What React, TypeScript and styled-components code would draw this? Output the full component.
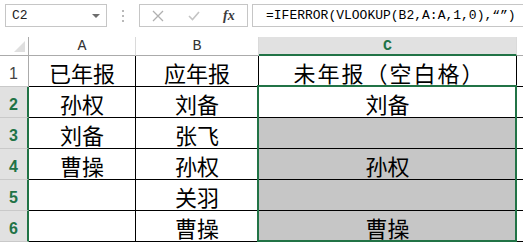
import React from "react";
import styled, { createGlobalStyle } from "styled-components";

const GREEN = "#217346";

const Global = createGlobalStyle`
    html, body {
        margin: 0;
        padding: 0;
        background: #ffffff;
        overflow: hidden;
    }
`;

type RowData = { cells: string[]; selected: boolean };

const rows: RowData[] = [
    { cells: ["已年报", "应年报", "未年报（空白格）"], selected: false },
    { cells: ["孙权", "刘备", "刘备"], selected: true },
    { cells: ["刘备", "张飞", ""], selected: true },
    { cells: ["曹操", "孙权", "孙权"], selected: true },
    { cells: ["", "关羽", ""], selected: true },
    { cells: ["", "曹操", "曹操"], selected: true },
];

const App = () => {
    return (
        <Page>
            <Global />
            <FormulaBar>
                <NameBox>
                    <NameText>C2</NameText>
                    <Caret width="8" height="4" viewBox="0 0 8 4">
                        <path d="M0 0 L8 0 L4 4 Z" fill="#6d6d6d" />
                    </Caret>
                </NameBox>
                <Grip width="3" height="12" viewBox="0 0 3 12">
                    <rect x="0" y="0" width="2" height="2" fill="#b9b9b9" />
                    <rect x="0" y="5" width="2" height="2" fill="#b9b9b9" />
                    <rect x="0" y="10" width="2" height="2" fill="#b9b9b9" />
                </Grip>
                <ButtonBox>
                    <ToolIcon width="12" height="12" viewBox="0 0 12 12">
                        <path d="M1 1 L11 11 M11 1 L1 11" stroke="#b0b0b0" strokeWidth="1.3" fill="none" />
                    </ToolIcon>
                    <ToolIcon width="12" height="10" viewBox="0 0 12 10">
                        <path d="M1 5 L4.5 8.5 L11 1" stroke="#c4c4c4" strokeWidth="1.6" fill="none" />
                    </ToolIcon>
                    <Fx>fx</Fx>
                </ButtonBox>
                <FormulaBox>=IFERROR(VLOOKUP(B2,A:A,1,0),“”)</FormulaBox>
            </FormulaBar>

            <Sheet>
                <Corner>
                    <svg width="11" height="11" viewBox="0 0 11 11">
                        <path d="M11 0 L11 11 L0 11 Z" fill="#dfdfdf" />
                    </svg>
                </Corner>
                <ColHeader $c={2}>A</ColHeader>
                <ColHeader $c={3}>B</ColHeader>
                <ColHeader $c={4} $active>C</ColHeader>
                <ColHeader $c={5} $last />

                {rows.map((row, i) => (
                    <React.Fragment key={i}>
                        <RowHeader $r={i + 2} $active={row.selected}>{i + 1}</RowHeader>
                        {row.cells.map((text, j) => (
                            <Cell
                                key={j}
                                $r={i + 2}
                                $c={j + 2}
                                $shaded={j === 2 && i >= 2}
                                $spread={text.length > 4}
                            >
                                {text}
                            </Cell>
                        ))}
                        <EdgeCell $r={i + 2} />
                    </React.Fragment>
                ))}

                <Selection />
            </Sheet>
        </Page>
    );
};

const Page = styled.div`
    width: 523px;
    height: 242px;
    overflow: hidden;
    background: #ffffff;
`;

const FormulaBar = styled.div`
    display: flex;
    align-items: flex-start;
    height: 33px;
    padding-top: 4px;
`;

const NameBox = styled.div`
    box-sizing: border-box;
    width: 102px;
    height: 23px;
    margin-left: 5px;
    border: 1px solid #c6c6c6;
    display: flex;
    align-items: center;
    justify-content: space-between;
    padding: 0 6px 0 6px;
`;

const NameText = styled.span`
    font-family: "Liberation Mono", monospace;
    font-size: 13px;
    color: #222222;
`;

const Caret = styled.svg`
    display: block;
`;

const Grip = styled.svg`
    display: block;
    margin: 6px 14px 0 15px;
`;

const ButtonBox = styled.div`
    box-sizing: border-box;
    width: 109px;
    height: 23px;
    border: 1px solid #c6c6c6;
    display: flex;
    align-items: center;
    padding-left: 12px;
`;

const ToolIcon = styled.svg`
    display: block;
    margin-right: 24px;
`;

const Fx = styled.span`
    font-family: "Liberation Serif", serif;
    font-style: italic;
    font-weight: bold;
    font-size: 14px;
    color: #3b3b3b;
    margin-left: -1px;
`;

const FormulaBox = styled.div`
    box-sizing: border-box;
    flex: 1;
    height: 23px;
    margin-left: 4px;
    margin-right: -4px;
    border: 1px solid #c6c6c6;
    padding-left: 13px;
    font-family: "Liberation Mono", monospace;
    font-size: 13px;
    line-height: 21px;
    color: #000000;
    white-space: nowrap;
    overflow: hidden;
`;

const Sheet = styled.div`
    display: grid;
    grid-template-columns: 29px 107px 123px 258px 1fr;
    grid-template-rows: 19px repeat(6, 31px);
`;

const Corner = styled.div`
    grid-row: 1;
    grid-column: 1;
    box-sizing: border-box;
    border-right: 1px solid #ababab;
    border-bottom: 1px solid #ababab;
    display: flex;
    align-items: flex-end;
    justify-content: flex-end;
    padding: 0 3px 3px 0;
`;

const ColHeader = styled.div<{ $c: number; $active?: boolean; $last?: boolean }>`
    grid-row: 1;
    grid-column: ${(p) => p.$c};
    box-sizing: border-box;
    background: ${(p) => (p.$active ? "#e1e1e1" : "#ffffff")};
    border-right: ${(p) => (p.$last ? "none" : "1px solid #dadada")};
    border-bottom: ${(p) => (p.$active ? `2px solid ${GREEN}` : "1px solid #ababab")};
    display: flex;
    align-items: center;
    justify-content: center;
    font-family: "Liberation Mono", monospace;
    font-size: 15px;
    font-weight: ${(p) => (p.$active ? "bold" : "normal")};
    color: ${(p) => (p.$active ? GREEN : "#333333")};
    padding-top: ${(p) => (p.$active ? "1px" : "0")};
`;

const RowHeader = styled.div<{ $r: number; $active: boolean }>`
    grid-row: ${(p) => p.$r};
    grid-column: 1;
    box-sizing: border-box;
    background: ${(p) => (p.$active ? "#e1e1e1" : "#ffffff")};
    border-right: ${(p) => (p.$active ? `2px solid ${GREEN}` : "1px solid #ababab")};
    border-bottom: 1px solid #c9c9c9;
    display: flex;
    align-items: flex-end;
    justify-content: center;
    padding-bottom: 3px;
    padding-right: ${(p) => (p.$active ? "0" : "1px")};
    font-family: "Liberation Sans", Arial, sans-serif;
    font-size: 16px;
    line-height: 18px;
    font-weight: ${(p) => (p.$active ? "bold" : "normal")};
    color: ${(p) => (p.$active ? GREEN : "#444444")};
`;

const Cell = styled.div<{ $r: number; $c: number; $shaded: boolean; $spread: boolean }>`
    grid-row: ${(p) => p.$r};
    grid-column: ${(p) => p.$c};
    box-sizing: border-box;
    background: ${(p) => (p.$shaded ? "#c6c6c6" : "#ffffff")};
    border-right: 1px solid #000000;
    border-bottom: 1px solid #000000;
    display: flex;
    align-items: flex-end;
    justify-content: center;
    padding-bottom: 1px;
    padding-left: ${(p) => (p.$spread ? "4px" : "0")};
    font-family: "Noto Sans CJK SC", "Noto Sans", sans-serif;
    font-size: 22px;
    line-height: 26px;
    letter-spacing: ${(p) => (p.$spread ? "2px" : "0")};
    color: #000000;
    white-space: nowrap;
`;

const EdgeCell = styled.div<{ $r: number }>`
    grid-row: ${(p) => p.$r};
    grid-column: 5;
    box-sizing: border-box;
    border-bottom: 1px solid #000000;
`;

const Selection = styled.div`
    grid-column: 4 / 5;
    grid-row: 3 / 8;
    margin: -2px 0 0 -2px;
    border: 2px solid ${GREEN};
    pointer-events: none;
    z-index: 1;
`;

export default App;
